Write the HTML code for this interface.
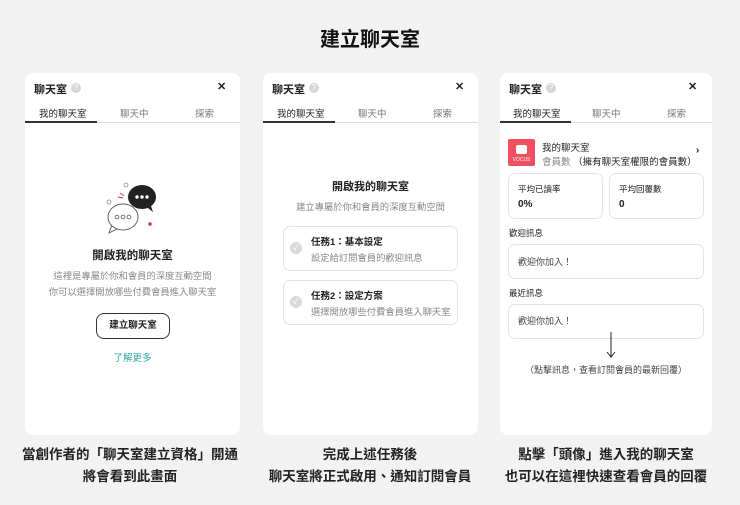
<!DOCTYPE html>
<html><head><meta charset="utf-8"><style>
*{margin:0;padding:0;box-sizing:border-box}
body{width:740px;height:505px;background:#f2f2f2;font-family:"Liberation Sans","Noto Sans CJK TC",sans-serif;color:#222;position:relative;overflow:hidden}
.abs{position:absolute}
.title{left:0;width:740px;top:23px;text-align:center;font-size:20px;font-weight:700;color:#111}
.card{background:#fff;border-radius:8px;top:73px;height:362px}
.hd{left:9px;top:8px;font-size:11px;font-weight:700;color:#222}
.q{top:10px;width:10px;height:10px;border-radius:50%;background:#d6d6d6;color:#fff;font-size:8px;line-height:10px;text-align:center}
.x{top:7px;font-size:11px;font-weight:700;color:#222}
.tabs{left:0;right:0;top:33px;height:17px;border-bottom:1px solid #ddd;font-size:9.5px;color:#777}
.tabs span{position:absolute;top:0}
.tabs .on{color:#222}
.ul{top:15px;height:2px;background:#333}
.cap{font-size:13.5px;font-weight:700;text-align:center;line-height:22px;top:444px;color:#222}
.gray{color:#888}
.box{border:1px solid #e3e3e3;border-radius:7px;position:absolute}
</style></head><body>
<div class="abs title">建立聊天室</div>

<!-- card 1 -->
<div class="abs card" style="left:25px;width:215px">
 <div class="abs hd">聊天室</div>
 <div class="abs q" style="left:46px">?</div>
 <div class="abs x" style="left:192px">✕</div>
 <div class="abs tabs"><span class="on" style="left:14px">我的聊天室</span><span style="left:95px">聊天中</span><span style="left:170px">探索</span><div class="abs ul" style="left:0;width:72px"></div></div>
 <svg class="abs" style="left:79px;top:106px" width="62" height="58" viewBox="0 0 62 58">
  <circle cx="22" cy="6" r="2" fill="none" stroke="#888" stroke-width=".8"/>
  <circle cx="5" cy="23" r="2" fill="none" stroke="#888" stroke-width=".8"/>
  <path d="M16 14l4 3M14 18l5 1" stroke="#d33" stroke-width=".9"/>
  <path d="M40 26l9 7-3-9" fill="#222"/>
  <ellipse cx="38" cy="18" rx="14" ry="12" fill="#222"/>
  <circle cx="33" cy="18" r="1.7" fill="#fff"/><circle cx="38" cy="18" r="1.7" fill="#fff"/><circle cx="43" cy="18" r="1.7" fill="#fff"/>
  <circle cx="46" cy="45" r="1.8" fill="#c33"/>
  <path d="M8 46l-3 8 8-4" fill="#fff" stroke="#555" stroke-width=".9"/>
  <ellipse cx="19" cy="38" rx="15" ry="13" fill="#fff" stroke="#555" stroke-width=".9"/>
  <circle cx="13" cy="38" r="1.9" fill="none" stroke="#555" stroke-width=".8"/><circle cx="19" cy="38" r="1.9" fill="none" stroke="#555" stroke-width=".8"/><circle cx="25" cy="38" r="1.9" fill="none" stroke="#555" stroke-width=".8"/>
 </svg>
 <div class="abs" style="left:0;width:215px;top:174px;text-align:center;font-size:11.5px;font-weight:700">開啟我的聊天室</div>
 <div class="abs gray" style="left:0;width:215px;top:195px;text-align:center;font-size:9.3px;line-height:16px">這裡是專屬於你和會員的深度互動空間<br>你可以選擇開放哪些付費會員進入聊天室</div>
 <div class="abs" style="left:71px;top:240px;width:74px;height:26px;border:1px solid #333;border-radius:8px;text-align:center;line-height:24px;font-size:9.5px;font-weight:700">建立聊天室</div>
 <div class="abs" style="left:0;width:215px;top:277px;text-align:center;font-size:9.5px;color:#2aa8a8">了解更多</div>
</div>

<!-- card 2 -->
<div class="abs card" style="left:263px;width:215px">
 <div class="abs hd">聊天室</div>
 <div class="abs q" style="left:46px">?</div>
 <div class="abs x" style="left:192px">✕</div>
 <div class="abs tabs"><span class="on" style="left:14px">我的聊天室</span><span style="left:95px">聊天中</span><span style="left:170px">探索</span><div class="abs ul" style="left:0;width:72px"></div></div>
 <div class="abs" style="left:0;width:215px;top:105px;text-align:center;font-size:11px;font-weight:700">開啟我的聊天室</div>
 <div class="abs gray" style="left:0;width:215px;top:126px;text-align:center;font-size:9.3px">建立專屬於你和會員的深度互動空間</div>
 <div class="box" style="left:20px;top:153px;width:175px;height:45px"></div>
 <div class="box" style="left:20px;top:207px;width:175px;height:45px"></div>
 <div class="abs" style="left:27px;top:169px;width:12px;height:12px;border-radius:50%;background:#d9d9d9;color:#fff;font-size:8px;text-align:center;line-height:12px">✓</div>
 <div class="abs" style="left:27px;top:223px;width:12px;height:12px;border-radius:50%;background:#d9d9d9;color:#fff;font-size:8px;text-align:center;line-height:12px">✓</div>
 <div class="abs" style="left:48px;top:161px;font-size:9.5px;font-weight:700">任務1：基本設定</div>
 <div class="abs gray" style="left:48px;top:177px;font-size:9.3px">設定給訂閱會員的歡迎訊息</div>
 <div class="abs" style="left:48px;top:215px;font-size:9.5px;font-weight:700">任務2：設定方案</div>
 <div class="abs gray" style="left:48px;top:231px;font-size:9.3px">選擇開放哪些付費會員進入聊天室</div>
</div>

<!-- card 3 -->
<div class="abs card" style="left:500px;width:212px">
 <div class="abs hd">聊天室</div>
 <div class="abs q" style="left:46px">?</div>
 <div class="abs x" style="left:188px">✕</div>
 <div class="abs tabs"><span class="on" style="left:13px">我的聊天室</span><span style="left:92px">聊天中</span><span style="left:167px">探索</span><div class="abs ul" style="left:0;width:71px"></div></div>
 <div class="abs" style="left:8px;top:66px;width:27px;height:27px;background:#ef4f5f;border-radius:2px"><div class="abs" style="left:8px;top:6px;width:11px;height:9px;background:#fff;border-radius:2px"></div><div class="abs" style="left:0;width:27px;top:18px;font-size:5px;color:#fff;text-align:center">VOCUS</div></div>
 <div class="abs" style="left:42px;top:67px;font-size:9.5px">我的聊天室</div>
 <div class="abs" style="left:42px;top:81px;font-size:9.5px"><span class="gray">會員數</span>&nbsp;（擁有聊天室權限的會員數）</div>
 <div class="abs" style="left:196px;top:72px;font-size:10px;font-weight:700">›</div>
 <div class="box" style="left:8px;top:100px;width:95px;height:46px"></div>
 <div class="box" style="left:109px;top:100px;width:95px;height:46px"></div>
 <div class="abs" style="left:18px;top:110px;font-size:8.5px">平均已讀率</div>
 <div class="abs" style="left:18px;top:126px;font-size:10px;font-weight:700">0%</div>
 <div class="abs" style="left:119px;top:110px;font-size:8.5px">平均回覆數</div>
 <div class="abs" style="left:119px;top:126px;font-size:10px;font-weight:700">0</div>
 <div class="abs" style="left:9px;top:154px;font-size:8.5px">歡迎訊息</div>
 <div class="box" style="left:8px;top:171px;width:196px;height:35px"></div>
 <div class="abs" style="left:18px;top:182px;font-size:9px;color:#444">歡迎你加入！</div>
 <div class="abs" style="left:9px;top:214px;font-size:8.5px">最近訊息</div>
 <div class="box" style="left:8px;top:231px;width:196px;height:35px"></div>
 <div class="abs" style="left:18px;top:241px;font-size:9px;color:#444">歡迎你加入！</div>
 <svg class="abs" style="left:106px;top:258px" width="10" height="28"><path d="M5 1v25M1 21l4 5 4-5" fill="none" stroke="#222" stroke-width="1"/></svg>
 <div class="abs" style="left:0;width:212px;top:290px;text-align:center;font-size:9px;color:#444">（點擊訊息，查看訂閱會員的最新回覆）</div>
</div>

<div class="abs cap" style="left:10px;width:240px">當創作者的「聊天室建立資格」開通<br>將會看到此畫面</div>
<div class="abs cap" style="left:250px;width:240px">完成上述任務後<br>聊天室將正式啟用、通知訂閱會員</div>
<div class="abs cap" style="left:486px;width:240px">點擊「頭像」進入我的聊天室<br>也可以在這裡快速查看會員的回覆</div>
</body></html>
